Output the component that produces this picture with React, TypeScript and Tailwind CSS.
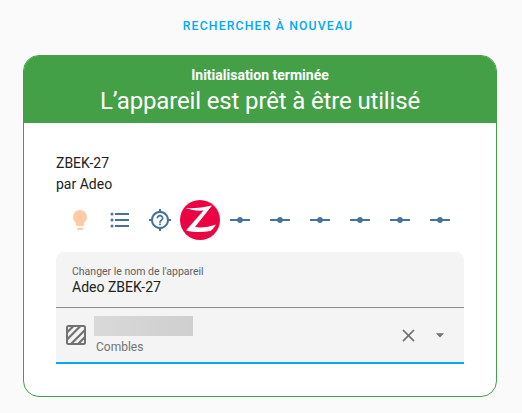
const BLUE = "#44739e";
const GREY = "#727272";

function MdiIcon({ d, color = BLUE, size = 24 }: { d: string; color?: string; size?: number }) {
  return (
    <svg viewBox="0 0 24 24" width={size} height={size} fill={color}>
      <path d={d} />
    </svg>
  );
}

const bulb =
  "M12,2A7,7 0 0,0 5,9C5,11.38 6.19,13.47 8,14.74V17A1,1 0 0,0 9,18H15A1,1 0 0,0 16,17V14.74C17.81,13.47 19,11.38 19,9A7,7 0 0,0 12,2M9,21A1,1 0 0,0 10,22H14A1,1 0 0,0 15,21V20H9V21Z";
const list =
  "M7,5H21V7H7V5M7,13V11H21V13H7M4,4.5A1.5,1.5 0 0,1 5.5,6A1.5,1.5 0 0,1 4,7.5A1.5,1.5 0 0,1 2.5,6A1.5,1.5 0 0,1 4,4.5M4,10.5A1.5,1.5 0 0,1 5.5,12A1.5,1.5 0 0,1 4,13.5A1.5,1.5 0 0,1 2.5,12A1.5,1.5 0 0,1 4,10.5M7,19V17H21V19H7M4,16.5A1.5,1.5 0 0,1 5.5,18A1.5,1.5 0 0,1 4,19.5A1.5,1.5 0 0,1 2.5,18A1.5,1.5 0 0,1 4,16.5Z";
const crosshairsQuestion =
  "M3.05 13H1V11H3.05C3.5 6.83 6.83 3.5 11 3.05V1H13V3.05C17.17 3.5 20.5 6.83 20.95 11H23V13H20.95C20.5 17.17 17.17 20.5 13 20.95V23H11V20.95C6.83 20.5 3.5 17.17 3.05 13M12 5A7 7 0 0 0 5 12A7 7 0 0 0 12 19A7 7 0 0 0 19 12A7 7 0 0 0 12 5M11.13 17.25H12.88V15.5H11.13V17.25M12 6.75C10.07 6.75 8.5 8.32 8.5 10.25H10.25C10.25 9.28 11.03 8.5 12 8.5S13.75 9.28 13.75 10.25C13.75 12 11.13 11.78 11.13 14.63H12.88C12.88 12.66 15.5 12.44 15.5 10.25C15.5 8.32 13.93 6.75 12 6.75Z";
const rayVertex =
  "M2,11H9.17C9.58,9.83 10.69,9 12,9C13.31,9 14.42,9.83 14.83,11H22V13H14.83C14.42,14.17 13.31,15 12,15C10.69,15 9.58,14.17 9.17,13H2V11Z";
const close =
  "M19,6.41L17.59,5L12,10.59L6.41,5L5,6.41L10.59,12L5,17.59L6.41,19L12,13.41L17.59,19L19,17.59L13.41,12L19,6.41Z";
const menuDown = "M7,10L12,15L17,10H7Z";

function ZigbeeLogo() {
  return (
    <svg viewBox="0 0 40 40" width={40} height={40}>
      <circle cx="20" cy="20" r="20" fill="#eb0443" />
      <path
        d="M5.5 8C14 8.5 24 7.5 32 5.5L15 27C21 28 29 27 36 24.5C34 28 32 30 30.5 31C22 32.5 14 32.5 6 30.5L23.5 10.5C17 11 11 10 5.5 8Z"
        fill="#fff"
      />
    </svg>
  );
}

function TextureBox() {
  return (
    <svg viewBox="0 0 24 24" width={24} height={24} fill="none">
      <defs>
        <clipPath id="texture-clip">
          <rect x="3" y="3" width="18" height="18" />
        </clipPath>
      </defs>
      <path d="M3 9.5L9.5 3M3 16.5L16.5 3M7 21L21 7M14 21L21 14" stroke={GREY} strokeWidth="2.2" clipPath="url(#texture-clip)" />
      <rect x="3" y="3" width="18" height="18" rx="1.5" stroke={GREY} strokeWidth="2" />
    </svg>
  );
}

export default function App() {
  return (
    <div className="h-[413px] w-[522px] overflow-hidden bg-[#fafafa] font-['Roboto',sans-serif]">
      <div className="flex h-[55px] justify-center pt-[17px] pl-[14px]">
        <span className="text-[12.25px] leading-[18px] font-medium tracking-[1.15px] text-[#03a9f4]">
          RECHERCHER À NOUVEAU
        </span>
      </div>

      <div className="ml-[23px] h-[342px] w-[474px] overflow-hidden rounded-[16px] border border-[#43a047] bg-white">
        <div className="flex h-[67px] flex-col items-center bg-[#43a047] pt-[11px] text-white">
          <p className="text-[14px] leading-[17px] font-bold">Initialisation terminée</p>
          <p className="mt-[1px] text-[24px] leading-[32px] tracking-[-0.15px]">L’appareil est prêt à être utilisé</p>
        </div>

        <div className="px-[32px] pt-[29px]">
          <p className="text-[14px] leading-[22px] text-[#212121]">ZBEK-27</p>
          <p className="-mt-[1px] text-[14px] leading-[22px] text-[#212121]">par Adeo</p>

          <div className="mt-[5px] flex h-[40px] pl-[4px]">
            <span className="flex w-[40px] items-center justify-center">
              <MdiIcon d={bulb} color="#ffcba4" />
            </span>
            <span className="flex w-[40px] items-center justify-center">
              <MdiIcon d={list} />
            </span>
            <span className="flex w-[40px] items-center justify-center">
              <MdiIcon d={crosshairsQuestion} />
            </span>
            <span className="flex w-[40px] items-center justify-center">
              <ZigbeeLogo />
            </span>
            {[0, 1, 2, 3, 4, 5].map((i) => (
              <span key={i} className="flex w-[40px] items-center justify-center">
                <MdiIcon d={rayVertex} />
              </span>
            ))}
          </div>

          <div className="mt-[12px] w-[408px]">
            <div className="h-[56px] rounded-t-[8px] border-b border-[#8c8c8c] bg-[#f4f4f4] px-[16px] pt-[14px]">
              <p className="text-[10.5px] leading-[12px] text-[#616161]">Changer le nom de l'appareil</p>
              <p className="text-[14px] leading-[19px] text-[#212121]">Adeo ZBEK-27</p>
            </div>
            <div className="flex h-[56px] items-center border-b-2 border-[#03a9f4] bg-[#f4f4f4]">
              <span className="ml-[8px] flex w-[24px] justify-center">
                <TextureBox />
              </span>
              <div className="ml-[6px] flex-1 pt-[1px]">
                <div className="h-[20px] w-[99px] bg-gradient-to-r from-[#d9d9d9] to-[#cfcfcf]" />
                <p className="mt-[3px] ml-[2px] text-[12px] leading-[16px] text-[#727272]">Combles</p>
              </div>
              <span className="mr-[11px] flex">
                <MdiIcon d={close} color={GREY} size={21} />
              </span>
              <span className="mr-[14px] flex">
                <MdiIcon d={menuDown} color={GREY} size={20} />
              </span>
            </div>
          </div>
        </div>
      </div>
    </div>
  );
}
